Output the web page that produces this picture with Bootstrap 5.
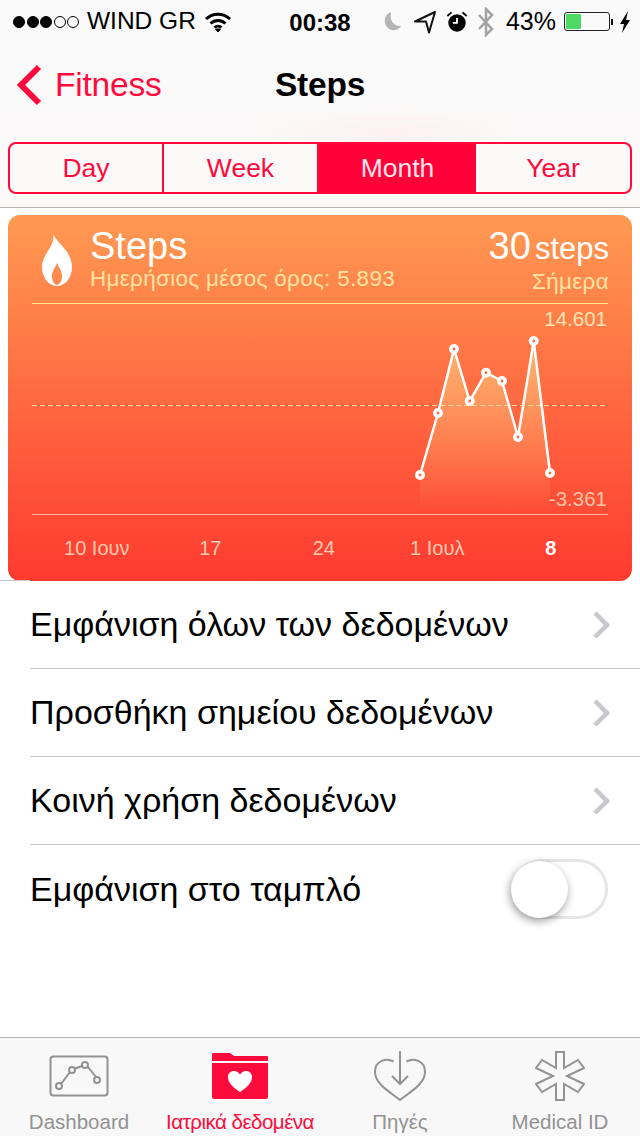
<!DOCTYPE html>
<html lang="el">
<head>
  <meta charset="UTF-8">
  <title>Steps</title>
  <link rel="stylesheet" href="https://cdn.jsdelivr.net/npm/bootstrap@5.3.3/dist/css/bootstrap.min.css">
  <style>
    body { width: 640px; height: 1136px; overflow: hidden; background: #fff; font-family: "Liberation Sans", Arial, sans-serif; color: #000; }
    .top-area { height: 208px; background: radial-gradient(ellipse 130px 22px at 390px 132px, #fdf1f0, transparent), linear-gradient(#fafafa, #fbf9f8); border-bottom: 1px solid #b5b5b5; }
    .status-bar { height: 40px; padding: 3px 9px 0 13px; font-size: 24.5px; }
    .dots { gap: 1.5px; margin-right: 8px; }
    .dot { width: 12px; height: 12px; border-radius: 50%; border: 1px solid #000; }
    .dot-on { background: #000; }
    .clock { position: absolute; left: 0; right: 0; text-align: center; font-weight: 700; font-size: 24px; top: 5px; }
    .moon-gap { margin-left: 11px; }
    .icon-gap { margin-left: 9px; }
    .pct { margin-left: 11px; font-size: 25px; }
    .batt { width: 46px; height: 19px; margin-left: 8px; border: 1px solid #222; border-radius: 3px; padding: 1px; }
    .batt-fill { width: 15px; height: 100%; background: #4cd964; border-radius: 1px; }
    .nav-row { height: 90px; padding-left: 16px; }
    .back-link { color: #ff0a3c; font-size: 33.500px; text-decoration: none; line-height: 1; letter-spacing: -.2px; }
    .back-chev { margin-right: 13px; }
    .nav-title { position: absolute; left: 0; right: 0; text-align: center; font-weight: 700; font-size: 33.500px; line-height: 1; pointer-events: none; letter-spacing: -.2px; }
    .seg { margin: 12px 8px 0; height: 52px; border: 2px solid #ff0a3c; border-radius: 8px; overflow: hidden; }
    .seg-item { width: 154px; padding-top: 1px; color: #ff0a3c; font-size: 26.500px; border-right: 2px solid #ff0a3c; }
    .seg-wide { width: 155px; }
    .seg-item:last-child { border-right: 0; }
    .seg-active { width: 157px; background: #ff0038; color: #fce4ea; border-right: 0; }
    .chart-card { margin: 7px 8px 0; height: 366px; border: 0; border-radius: 12px; color: #fff; overflow: hidden; position: relative; background: linear-gradient(#ff9a52, #ff3a30); }
    .chart-head { height: 88px; padding: 12px 23px 0 34px; }
    .flame { margin: 6px 18px 0 0; }
    .head-title { font-size: 38px; line-height: 38px; }
    .head-sub { font-size: 22.400px; line-height: 28px; color: #ffe3a0; letter-spacing: .35px; }
    .head-unit { font-size: 31px; margin-left: 4px; }
    .chart-svg { position: absolute; left: 0; top: 0; }
    .axis-max, .axis-min { position: absolute; right: 25px; font-size: 20.500px; line-height: 1; }
    .axis-max { top: 94px; color: #ffe3b5; }
    .axis-min { top: 274px; color: #ffc4a5; }
    .x-labels { position: absolute; left: 32px; top: 323px; width: 576px; font-size: 20px; line-height: 1; color: #ffc9ae; }
    .x-label { width: 113.500px; text-align: center; }
    .x-label-on { color: #fff; font-weight: 700; }
    .rows .list-group-item { height: 88px; padding: 0 30px 0 0; margin-left: 30px; font-size: 34px; color: #000; border-color: #c8c7cc; border-width: 0 0 1px; }
    .rows .list-group-item:last-child { margin-left: 0; padding: 0 32px 0 30px; }
    .row-sep { height: 1px; width: 30px; background: #c8c7cc; margin-top: -1px; position: relative; }
    .sw-track { width: 96px; height: 60px; border: 3px solid #e6e6e6; border-radius: 30px; position: relative; }
    .sw-knob { position: absolute; left: -4px; top: -1px; width: 57px; height: 57px; border-radius: 50%; background: #fff; box-shadow: -1px 3px 8px rgba(0,0,0,.4); }
    .tabbar { position: absolute; left: 0; right: 0; bottom: 0; height: 99px; background: #f8f8f8; border-top: 1px solid #b3b3b3; }
    .tab-item { width: 25%; color: #929292; font-size: 20.500px; line-height: 1; }
    .tab-first { padding-right: 2px; }
    .tab-icon { height: 64px; padding-top: 12px; }
    .tab-on { color: #ff0a3c; white-space: nowrap; letter-spacing: -.5px; }
    .tab-label { margin-top: 10px; }
  </style>
</head>
<body class="position-relative">

<div class="top-area">
  <div class="status-bar d-flex align-items-center position-relative">
    <div class="d-flex dots">
      <span class="dot dot-on"></span><span class="dot dot-on"></span><span class="dot dot-on"></span><span class="dot"></span><span class="dot"></span>
    </div>
    <span>WIND GR</span>
    <svg class="ms-2" width="28" height="22" viewBox="0 0 28 22" fill="none" stroke="#000" stroke-width="3"><path d="M2 8c7-6.500 17-6.500 24 0"/><path d="M6.500 12.500c4.500-4 10.500-4 15 0"/><path d="M10.500 16.500c2-1.800 5-1.800 7 0"/><path d="M11.500 18l2.500 3 2.500-3z" fill="#000" stroke-width="1"/></svg>
    <span class="clock">00:38</span>
    <div class="ms-auto d-flex align-items-center">
      <svg width="18" height="22" viewBox="0 0 18 22"><path d="M7 1c-5 2-7 6-6 11 1 5 6 8 10 7 3-.5 5-2 6-4-6 1-12-5-10-14z" fill="#b5b5b5"/></svg>
      <svg class="moon-gap" width="24" height="24" viewBox="0 0 24 24" fill="none" stroke="#111" stroke-width="2" stroke-linejoin="round"><path d="M22 2L2 11.500l11 0 3 11z"/></svg>
      <svg class="icon-gap" width="22" height="24" viewBox="0 0 24 24"><circle cx="12" cy="13" r="9.500" fill="#000"/><path d="M12 7.500V13H7.500" fill="none" stroke="#fff" stroke-width="2"/><path d="M1.500 5.500L6 1.500M22.500 5.500L18 1.500" stroke="#000" stroke-width="2"/></svg>
      <svg class="icon-gap" width="18" height="30" viewBox="0 0 18 30" fill="none" stroke="#a3a3a3" stroke-width="2.500"><path d="M2 8l13 14-6 6V2l6 6L2 22"/></svg>
      <span class="pct">43%</span>
      <div class="batt"><div class="batt-fill"></div></div>
      <svg width="21" height="24" viewBox="0 0 21 24"><rect x="1" y="9" width="2" height="6" fill="#111"/><path d="M18 1L10 14h4l-2 9 8-13h-4l2-9z" fill="#000"/></svg>
    </div>
  </div>

  <div class="nav-row d-flex align-items-center position-relative">
    <a class="back-link d-flex align-items-center" href="#">
      <svg class="back-chev" width="26" height="42" viewBox="0 0 26 42" fill="none" stroke="#ff0a3c" stroke-width="6"><path d="M23 3L5 21l18 18"/></svg>
      Fitness
    </a>
    <div class="nav-title">Steps</div>
  </div>

  <div class="seg d-flex">
    <div class="seg-item d-flex align-items-center justify-content-center">Day</div>
    <div class="seg-item seg-wide d-flex align-items-center justify-content-center">Week</div>
    <div class="seg-item seg-active d-flex align-items-center justify-content-center">Month</div>
    <div class="seg-item d-flex align-items-center justify-content-center">Year</div>
  </div>
</div>

<div class="card chart-card">
  <svg class="chart-svg" width="624" height="366" viewBox="0 0 624 366">
    <defs>
      <linearGradient id="areaFill" gradientUnits="userSpaceOnUse" x1="0" y1="126" x2="0" y2="295">
        <stop offset="0" stop-color="#ffc27a" stop-opacity=".8"/>
        <stop offset="1" stop-color="#ffc27a" stop-opacity="0"/>
      </linearGradient>
    </defs>
    <path d="M24 88.500H600" stroke="#ffe98f" stroke-width="1"/>
    <path d="M24 299.500H600" stroke="#ffb59a" stroke-width="1"/>
    <path d="M412 260L430 198 446 134 461.700 186 478 157.700 494 166 510 222 525.700 126 542 258V295H412z" fill="url(#areaFill)"/>
    <path d="M24 190.500H600" stroke="#ffd9a0" stroke-width="1" stroke-dasharray="5 3"/>
    <path d="M412 260L430 198 446 134 461.700 186 478 157.700 494 166 510 222 525.700 126 542 258" fill="none" stroke="#fff" stroke-width="2.500"/>
    <g fill="#ff6a40" stroke="#fff" stroke-width="3.600">
      <circle cx="412" cy="260" r="3.200"/><circle cx="430" cy="198" r="3.200"/><circle cx="446" cy="134" r="3.200"/>
      <circle cx="461.700" cy="186" r="3.200"/><circle cx="478" cy="157.700" r="3.200"/><circle cx="494" cy="166" r="3.200"/>
      <circle cx="510" cy="222" r="3.200"/><circle cx="525.700" cy="126" r="3.200"/><circle cx="542" cy="258" r="3.200"/>
    </g>
  </svg>
  <div class="chart-head d-flex position-relative">
    <svg class="flame" width="30" height="53" viewBox="0 0 30 53"><path fill-rule="evenodd" d="M11 0C12 8 30 17 30 34 30 45 23 53 15 53 7 53 0 45 0 34 0 20 14 14 11 0ZM15 30C13 35 10 38 10 43 10 48 12 51 15 52 18 51 20 48 20 43 20 38 17 35 15 30Z" fill="#fff"/></svg>
    <div>
      <div class="head-title">Steps</div>
      <div class="head-sub">Ημερήσιος μέσος όρος: 5.893</div>
    </div>
    <div class="ms-auto text-end">
      <div class="head-title">30<span class="head-unit">steps</span></div>
      <div class="head-sub">Σήμερα</div>
    </div>
  </div>
  <div class="axis-max">14.601</div>
  <div class="axis-min">-3.361</div>
  <div class="x-labels d-flex">
    <div class="x-label">10 Ιουν</div>
    <div class="x-label">17</div>
    <div class="x-label">24</div>
    <div class="x-label">1 Ιουλ</div>
    <div class="x-label x-label-on">8</div>
  </div>
</div>

<div class="row-sep"></div>
<div class="list-group list-group-flush rows">
  <div class="list-group-item d-flex align-items-center justify-content-between">Εμφάνιση όλων των δεδομένων
    <svg width="18" height="28" viewBox="0 0 18 28" fill="none" stroke="#c7c7cc" stroke-width="4.500"><path d="M3 2l12 12L3 26"/></svg></div>
  <div class="list-group-item d-flex align-items-center justify-content-between">Προσθήκη σημείου δεδομένων
    <svg width="18" height="28" viewBox="0 0 18 28" fill="none" stroke="#c7c7cc" stroke-width="4.500"><path d="M3 2l12 12L3 26"/></svg></div>
  <div class="list-group-item d-flex align-items-center justify-content-between">Κοινή χρήση δεδομένων
    <svg width="18" height="28" viewBox="0 0 18 28" fill="none" stroke="#c7c7cc" stroke-width="4.500"><path d="M3 2l12 12L3 26"/></svg></div>
  <div class="list-group-item d-flex align-items-center justify-content-between">Εμφάνιση στο ταμπλό
    <div class="sw-track"><div class="sw-knob"></div></div></div>
</div>

<div class="tabbar d-flex">
  <div class="tab-item tab-first d-flex flex-column align-items-center">
    <div class="tab-icon d-flex align-items-center">
      <svg width="60" height="42" viewBox="0 0 60 42" fill="none" stroke="#929292" stroke-width="2"><rect x="1.500" y="1.500" width="57" height="39" rx="3"/><path d="M12 29L21 17M25 14L33 11M39 12L47 22"/><circle cx="10" cy="31" r="3"/><circle cx="23" cy="15" r="3"/><circle cx="36" cy="10" r="3"/><circle cx="48" cy="25" r="3"/></svg>
    </div>
    <div class="tab-label">Dashboard</div>
  </div>
  <div class="tab-item tab-on d-flex flex-column align-items-center">
    <div class="tab-icon d-flex align-items-center">
      <svg width="56" height="46" viewBox="0 0 56 46"><path d="M0 8V1q0-1 1-1h17l4 3h33q1 0 1 1v4z" fill="#ff0a3c"/><path d="M0 10h56v34q0 2-2 2H2q-2 0-2-2z" fill="#ff0a3c"/><path d="M28 39c-7-5-12-9-12-15 0-4 3-6 6-6 2.500 0 4.500 1.500 6 3.500 1.500-2 3.500-3.500 6-3.500 3 0 6 2 6 6 0 6-5 10-12 15z" fill="#fff"/></svg>
    </div>
    <div class="tab-label">Ιατρικά δεδομένα</div>
  </div>
  <div class="tab-item d-flex flex-column align-items-center">
    <div class="tab-icon d-flex align-items-center">
      <svg width="54" height="50" viewBox="0 0 54 50" fill="none" stroke="#929292" stroke-width="2"><path d="M20.500 10.500C14 7 2 9 2 21 2 33 17 41 27 49 37 41 52 33 52 21 52 9 40 7 33.500 10.500"/><path d="M27 0v33M19 25l8 8 8-8"/></svg>
    </div>
    <div class="tab-label">Πηγές</div>
  </div>
  <div class="tab-item d-flex flex-column align-items-center">
    <div class="tab-icon d-flex align-items-center">
      <svg width="50" height="50" viewBox="-1 0 50 50" fill="none" stroke="#929292" stroke-width="2"><path d="M20 1h8v16l14-8 6 8-17 8 17 8-6 8-14-8v16h-8V33L6 41l-6-8 17-8-17-8 6-8 14 8z"/></svg>
    </div>
    <div class="tab-label">Medical ID</div>
  </div>
</div>

<script src="https://cdn.jsdelivr.net/npm/bootstrap@5.3.3/dist/js/bootstrap.bundle.min.js"></script>
</body>
</html>
